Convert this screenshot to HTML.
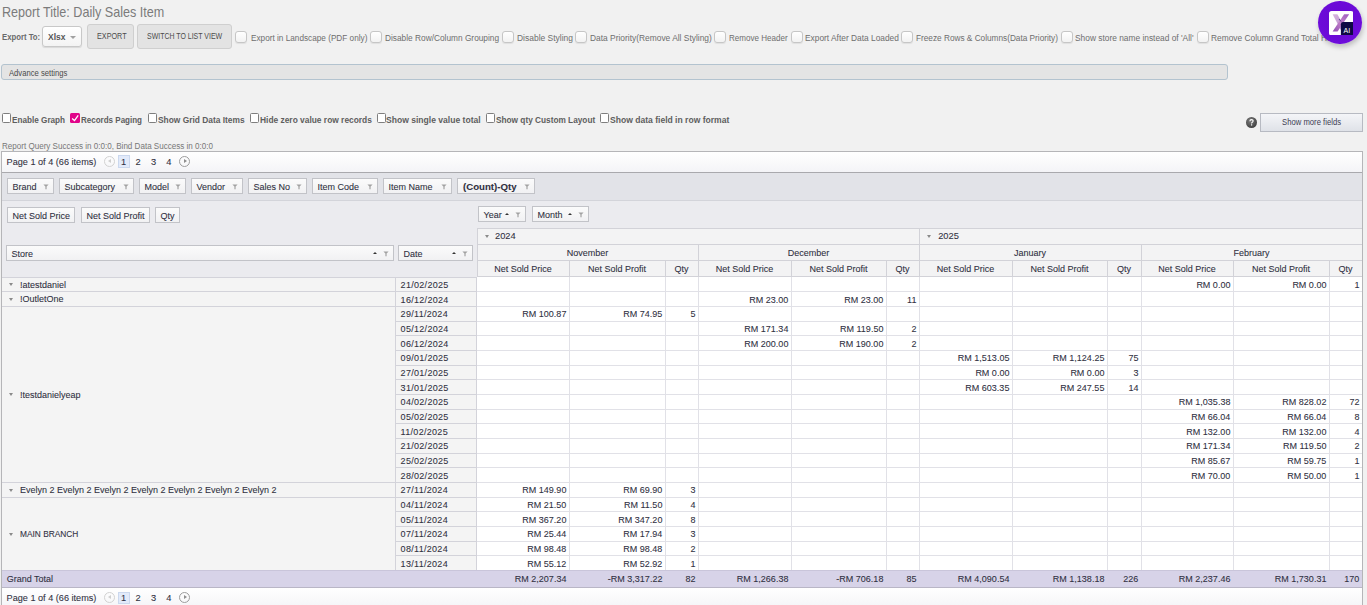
<!DOCTYPE html><html><head><meta charset="utf-8"><style>
*{margin:0;padding:0;box-sizing:border-box}
html,body{width:1367px;height:605px;overflow:hidden;background:#f1f1f1;font-family:"Liberation Sans", sans-serif;position:relative}
.t{position:absolute;white-space:nowrap;line-height:12px;transform-origin:0 0}
.a{position:absolute}
.cb{position:absolute;width:12px;height:12px;border:1px solid #c6c6c6;border-radius:3px;background:linear-gradient(#fff,#f2f2f2);box-shadow:0 1px 1px rgba(0,0,0,.07)}
.cb2{position:absolute;width:9px;height:10px;border:1px solid #7e7e7e;border-radius:1.5px;background:#fff}
.fb{position:absolute;border:1px solid #c2c3c8;background:#f8f8f8;height:15px}
.ft{position:absolute;white-space:nowrap;font-size:9px;line-height:12px;color:#30303f;-webkit-text-stroke:0.08px #30303f}
.ico{position:absolute;width:0;height:0;border-left:2.5px solid transparent;border-right:2.5px solid transparent;border-top:4px solid #8a8a8a}
.up{position:absolute;width:0;height:0;border-left:3px solid transparent;border-right:3px solid transparent;border-bottom:4px solid #333}
.hl{position:absolute;height:1px}
.vl{position:absolute;width:1px}
</style></head><body>
<div class="t" style="left:1.50px;top:3.50px;font-size:14.5px;line-height:16px;color:#7b7b7b;transform:scaleX(0.868)">Report Title: Daily Sales Item</div>
<div class="t" style="left:1.50px;top:30.50px;font-size:9px;font-weight:bold;color:#6a6a6a;transform:scaleX(0.86)">Export To:</div>
<div class="a" style="left:42px;top:26px;width:40px;height:21px;border:1px solid #c8c8c8;border-radius:3px;background:linear-gradient(#fff,#f3f3f3);box-shadow:0 1px 1px rgba(0,0,0,.1)"></div>
<div class="t" style="left:48.20px;top:30.20px;font-size:9.5px;line-height:13px;font-weight:bold;color:#555;transform:scaleX(0.89)">Xlsx</div>
<div class="a" style="left:70.2px;top:35.5px;width:0;height:0;border-left:3px solid transparent;border-right:3px solid transparent;border-top:3px solid #a0a0a0"></div>
<div class="a" style="left:87px;top:24px;width:47px;height:25px;border:1px solid #cfcfcf;border-radius:3px;background:#e3e3e3"></div>
<div class="t" style="left:96.60px;top:30.20px;font-size:8.5px;color:#4c4c4c;transform:scaleX(0.85)">EXPORT</div>
<div class="a" style="left:137px;top:24px;width:95px;height:25px;border:1px solid #cfcfcf;border-radius:3px;background:#e3e3e3"></div>
<div class="t" style="left:146.50px;top:30.20px;font-size:8.5px;color:#4c4c4c;transform:scaleX(0.82)">SWITCH TO LIST VIEW</div>
<div class="cb" style="left:235.0px;top:31.0px"></div>
<div class="t" style="left:250.80px;top:32.20px;font-size:9.2px;color:#6e6e6e;transform:scaleX(0.8939)">Export in Landscape (PDF only)</div>
<div class="cb" style="left:369.8px;top:31.0px"></div>
<div class="t" style="left:384.70px;top:32.20px;font-size:9.2px;color:#6e6e6e;transform:scaleX(0.9045)">Disable Row/Column Grouping</div>
<div class="cb" style="left:502.0px;top:31.0px"></div>
<div class="t" style="left:516.50px;top:32.20px;font-size:9.2px;color:#6e6e6e;transform:scaleX(0.9213)">Disable Styling</div>
<div class="cb" style="left:575.1px;top:31.0px"></div>
<div class="t" style="left:589.80px;top:32.20px;font-size:9.2px;color:#6e6e6e;transform:scaleX(0.9140)">Data Priority(Remove All Styling)</div>
<div class="cb" style="left:714.4px;top:31.0px"></div>
<div class="t" style="left:728.70px;top:32.20px;font-size:9.2px;color:#6e6e6e;transform:scaleX(0.8759)">Remove Header</div>
<div class="cb" style="left:790.5px;top:31.0px"></div>
<div class="t" style="left:804.60px;top:32.20px;font-size:9.2px;color:#6e6e6e;transform:scaleX(0.9101)">Export After Data Loaded</div>
<div class="cb" style="left:901.4px;top:31.0px"></div>
<div class="t" style="left:915.60px;top:32.20px;font-size:9.2px;color:#6e6e6e;transform:scaleX(0.8971)">Freeze Rows &amp; Columns(Data Priority)</div>
<div class="cb" style="left:1060.9px;top:31.0px"></div>
<div class="t" style="left:1075.30px;top:32.20px;font-size:9.2px;color:#6e6e6e;transform:scaleX(0.9103)">Show store name instead of 'All'</div>
<div class="cb" style="left:1196.5px;top:31.0px"></div>
<div class="t" style="left:1210.70px;top:32.20px;font-size:9.2px;color:#6e6e6e;transform:scaleX(0.9100)">Remove Column Grand Total Header</div>
<div class="a" style="left:1px;top:64px;width:1227px;height:16px;border:1px solid #b3c3cf;border-radius:3px;background:#e4e4e4"></div>
<div class="t" style="left:9.00px;top:67.20px;font-size:9px;color:#4a4a4a;transform:scaleX(0.8505)">Advance settings</div>
<div class="cb2" style="left:2.2px;top:113px"></div>
<div class="t" style="left:12.40px;top:113.60px;font-size:9px;font-weight:bold;color:#5e5e5e;transform:scaleX(0.9074)">Enable Graph</div>
<div class="a" style="left:70px;top:113px;width:10px;height:10px;background:#e1058a;border-radius:1.5px"></div>
<svg class="a" style="left:70px;top:113px" width="10" height="10" viewBox="0 0 10 10"><path d="M2.1 5.6 L4.5 7.6 L8.2 2.4" fill="none" stroke="#fff" stroke-width="1.3"/></svg>
<div class="t" style="left:81.20px;top:113.60px;font-size:9px;font-weight:bold;color:#5e5e5e;transform:scaleX(0.8903)">Records Paging</div>
<div class="cb2" style="left:147.7px;top:113px"></div>
<div class="t" style="left:157.60px;top:113.60px;font-size:9px;font-weight:bold;color:#5e5e5e;transform:scaleX(0.9309)">Show Grid Data Items</div>
<div class="cb2" style="left:249.7px;top:113px"></div>
<div class="t" style="left:259.60px;top:113.60px;font-size:9px;font-weight:bold;color:#5e5e5e;transform:scaleX(0.9321)">Hide zero value row records</div>
<div class="cb2" style="left:376.6px;top:113px"></div>
<div class="t" style="left:386.20px;top:113.60px;font-size:9px;font-weight:bold;color:#5e5e5e;transform:scaleX(0.9515)">Show single value total</div>
<div class="cb2" style="left:485.5px;top:113px"></div>
<div class="t" style="left:495.80px;top:113.60px;font-size:9px;font-weight:bold;color:#5e5e5e;transform:scaleX(0.9185)">Show qty Custom Layout</div>
<div class="cb2" style="left:600.0px;top:113px"></div>
<div class="t" style="left:610.40px;top:113.60px;font-size:9px;font-weight:bold;color:#5e5e5e;transform:scaleX(0.9505)">Show data field in row format</div>
<svg class="a" style="left:1246px;top:117px" width="11" height="11" viewBox="0 0 11 11"><defs><radialGradient id="qg" cx="40%" cy="35%" r="70%"><stop offset="0" stop-color="#7c7c7c"/><stop offset="1" stop-color="#3f3f3f"/></radialGradient></defs><circle cx="5.5" cy="5.5" r="5.5" fill="url(#qg)"/><path d="M3.9 4.2 Q3.9 2.6 5.5 2.6 Q7.1 2.6 7.1 4.0 Q7.1 4.9 6.1 5.4 Q5.6 5.7 5.6 6.5" fill="none" stroke="#fff" stroke-width="1.1"/><rect x="5" y="7.3" width="1.2" height="1.2" fill="#fff"/></svg>
<div class="a" style="left:1260px;top:113px;width:103px;height:19px;border:1px solid #b7bac2;background:linear-gradient(#f4f5f8,#dfe2e8)"></div>
<div class="t" style="left:1282.00px;top:116.00px;font-size:9px;color:#3c3c52;transform:scaleX(0.8547)">Show more fields</div>
<div class="t" style="left:1.50px;top:139.80px;font-size:8.5px;color:#777;transform:scaleX(0.9481)">Report Query Success in 0:0:0, Bind Data Success in 0:0:0</div>
<div class="a" style="left:1px;top:151.4px;width:1362.0px;height:458.6px;border:1px solid #b5b5b8;border-bottom:none;background:#ebebef"></div>
<div class="a" style="left:2px;top:152.4px;width:1360.0px;height:19.6px;background:linear-gradient(#fff,#f4f4f7)"></div>
<div class="hl" style="left:2px;top:172.0px;width:1360.0px;background:#a9a9ad"></div>
<div class="ft" style="left:6.6px;top:155.50px;font-size:9.15px">Page 1 of 4 (66 items)</div>
<div class="a" style="left:103.9px;top:155.60px;width:11px;height:11px;border:1px solid #d2d2d2;border-radius:50%"></div>
<div class="a" style="left:107.6px;top:158.80px;width:0;height:0;border-top:2.3px solid transparent;border-bottom:2.3px solid transparent;border-right:3px solid #cfcfcf"></div>
<div class="a" style="left:117.6px;top:155.20px;width:12.3px;height:12.4px;border:1px solid #cbd8ee;background:#e2eafa"></div>
<div class="ft" style="left:121.1px;top:155.50px;font-size:9.3px">1</div>
<div class="ft" style="left:135.5px;top:155.50px;font-size:9.3px">2</div>
<div class="ft" style="left:150.9px;top:155.50px;font-size:9.3px">3</div>
<div class="ft" style="left:166.3px;top:155.50px;font-size:9.3px">4</div>
<div class="a" style="left:179px;top:155.60px;width:11px;height:11px;border:1px solid #9d9d9d;border-radius:50%"></div>
<div class="a" style="left:183.6px;top:158.80px;width:0;height:0;border-top:2.3px solid transparent;border-bottom:2.3px solid transparent;border-left:3px solid #8e8e8e"></div>
<div class="a" style="left:2px;top:173.0px;width:1360.0px;height:27.2px;background:#e2e3e8"></div>
<div class="hl" style="left:2px;top:200.2px;width:1360.0px;background:#d3d4da"></div>
<div class="fb" style="left:7.0px;top:178.0px;width:47.0px;height:16.0px;background:linear-gradient(#fbfbfb,#f1f1f3)"></div>
<div class="ft" style="left:12.5px;top:180.5px;">Brand</div>
<svg class="a" style="left:43.0px;top:184.4px" width="6" height="6" viewBox="0 0 6 6"><path d="M0.4 0.5H5.6L3.6 2.6V5.2H2.4V2.6Z" fill="#a2a2a2"/></svg>
<div class="fb" style="left:59.0px;top:178.0px;width:75.0px;height:16.0px;background:linear-gradient(#fbfbfb,#f1f1f3)"></div>
<div class="ft" style="left:64.5px;top:180.5px;">Subcategory</div>
<svg class="a" style="left:123.0px;top:184.4px" width="6" height="6" viewBox="0 0 6 6"><path d="M0.4 0.5H5.6L3.6 2.6V5.2H2.4V2.6Z" fill="#a2a2a2"/></svg>
<div class="fb" style="left:139.0px;top:178.0px;width:47.0px;height:16.0px;background:linear-gradient(#fbfbfb,#f1f1f3)"></div>
<div class="ft" style="left:144.5px;top:180.5px;">Model</div>
<svg class="a" style="left:175.0px;top:184.4px" width="6" height="6" viewBox="0 0 6 6"><path d="M0.4 0.5H5.6L3.6 2.6V5.2H2.4V2.6Z" fill="#a2a2a2"/></svg>
<div class="fb" style="left:191.0px;top:178.0px;width:52.0px;height:16.0px;background:linear-gradient(#fbfbfb,#f1f1f3)"></div>
<div class="ft" style="left:196.5px;top:180.5px;">Vendor</div>
<svg class="a" style="left:232.0px;top:184.4px" width="6" height="6" viewBox="0 0 6 6"><path d="M0.4 0.5H5.6L3.6 2.6V5.2H2.4V2.6Z" fill="#a2a2a2"/></svg>
<div class="fb" style="left:248.0px;top:178.0px;width:59.0px;height:16.0px;background:linear-gradient(#fbfbfb,#f1f1f3)"></div>
<div class="ft" style="left:253.5px;top:180.5px;">Sales No</div>
<svg class="a" style="left:296.0px;top:184.4px" width="6" height="6" viewBox="0 0 6 6"><path d="M0.4 0.5H5.6L3.6 2.6V5.2H2.4V2.6Z" fill="#a2a2a2"/></svg>
<div class="fb" style="left:312.0px;top:178.0px;width:66.0px;height:16.0px;background:linear-gradient(#fbfbfb,#f1f1f3)"></div>
<div class="ft" style="left:317.5px;top:180.5px;">Item Code</div>
<svg class="a" style="left:367.0px;top:184.4px" width="6" height="6" viewBox="0 0 6 6"><path d="M0.4 0.5H5.6L3.6 2.6V5.2H2.4V2.6Z" fill="#a2a2a2"/></svg>
<div class="fb" style="left:383.0px;top:178.0px;width:69.0px;height:16.0px;background:linear-gradient(#fbfbfb,#f1f1f3)"></div>
<div class="ft" style="left:388.5px;top:180.5px;">Item Name</div>
<svg class="a" style="left:441.0px;top:184.4px" width="6" height="6" viewBox="0 0 6 6"><path d="M0.4 0.5H5.6L3.6 2.6V5.2H2.4V2.6Z" fill="#a2a2a2"/></svg>
<div class="fb" style="left:457.0px;top:178.0px;width:78.0px;height:16.0px;background:linear-gradient(#fbfbfb,#f1f1f3)"></div>
<div class="ft" style="left:462.5px;top:180.5px;font-weight:bold;transform-origin:0 0;transform:scaleX(1.07);">(Count)-Qty</div>
<svg class="a" style="left:524.0px;top:184.4px" width="6" height="6" viewBox="0 0 6 6"><path d="M0.4 0.5H5.6L3.6 2.6V5.2H2.4V2.6Z" fill="#a2a2a2"/></svg>
<div class="fb" style="left:7.0px;top:207px;width:68.0px;height:16px;background:linear-gradient(#fbfbfb,#f1f1f3)"></div>
<div class="ft" style="left:12.4px;top:209.6px">Net Sold Price</div>
<div class="fb" style="left:81.0px;top:207px;width:69.0px;height:16px;background:linear-gradient(#fbfbfb,#f1f1f3)"></div>
<div class="ft" style="left:86.4px;top:209.6px">Net Sold Profit</div>
<div class="fb" style="left:155.0px;top:207px;width:25.0px;height:16px;background:linear-gradient(#fbfbfb,#f1f1f3)"></div>
<div class="ft" style="left:160.4px;top:209.6px">Qty</div>
<div class="fb" style="left:478.0px;top:206.0px;width:48.0px;height:16.0px;background:linear-gradient(#fbfbfb,#f1f1f3)"></div>
<div class="ft" style="left:483.5px;top:208.5px;">Year</div>
<svg class="a" style="left:515.0px;top:212.4px" width="6" height="6" viewBox="0 0 6 6"><path d="M0.4 0.5H5.6L3.6 2.6V5.2H2.4V2.6Z" fill="#a2a2a2"/></svg>
<div class="up" style="left:504.7px;top:212.9px;border-left-width:2.7px;border-right-width:2.7px;border-bottom-width:2.7px"></div>
<div class="fb" style="left:532.0px;top:206.0px;width:57.0px;height:16.0px;background:linear-gradient(#fbfbfb,#f1f1f3)"></div>
<div class="ft" style="left:537.5px;top:208.5px;">Month</div>
<svg class="a" style="left:578.0px;top:212.4px" width="6" height="6" viewBox="0 0 6 6"><path d="M0.4 0.5H5.6L3.6 2.6V5.2H2.4V2.6Z" fill="#a2a2a2"/></svg>
<div class="up" style="left:567.7px;top:212.9px;border-left-width:2.7px;border-right-width:2.7px;border-bottom-width:2.7px"></div>
<div class="fb" style="left:6.0px;top:245.0px;width:388.0px;height:16.0px;background:linear-gradient(#fbfbfb,#f1f1f3)"></div>
<div class="ft" style="left:11.5px;top:247.5px;">Store</div>
<svg class="a" style="left:383.0px;top:251.4px" width="6" height="6" viewBox="0 0 6 6"><path d="M0.4 0.5H5.6L3.6 2.6V5.2H2.4V2.6Z" fill="#a2a2a2"/></svg>
<div class="up" style="left:372.7px;top:251.9px;border-left-width:2.7px;border-right-width:2.7px;border-bottom-width:2.7px"></div>
<div class="fb" style="left:398.0px;top:245.0px;width:75.0px;height:16.0px;background:linear-gradient(#fbfbfb,#f1f1f3)"></div>
<div class="ft" style="left:403.5px;top:247.5px;">Date</div>
<svg class="a" style="left:462.0px;top:251.4px" width="6" height="6" viewBox="0 0 6 6"><path d="M0.4 0.5H5.6L3.6 2.6V5.2H2.4V2.6Z" fill="#a2a2a2"/></svg>
<div class="up" style="left:451.7px;top:251.9px;border-left-width:2.7px;border-right-width:2.7px;border-bottom-width:2.7px"></div>
<div class="a" style="left:477.0px;top:228.0px;width:885.0px;height:48.0px;background:#f3f3f4"></div>
<div class="hl" style="left:477.0px;top:228.0px;width:885.0px;background:#d2d2d8"></div>
<div class="hl" style="left:477.0px;top:244.0px;width:885.0px;background:#d2d2d8"></div>
<div class="hl" style="left:477.0px;top:260.0px;width:885.0px;background:#d2d2d8"></div>
<div class="hl" style="left:477.0px;top:276.0px;width:885.0px;background:#d2d2d8"></div>
<div class="vl" style="left:477.0px;top:228.0px;height:48.0px;background:#d2d2d8"></div>
<div class="vl" style="left:919.0px;top:228.0px;height:48.0px;background:#d2d2d8"></div>
<div class="vl" style="left:698.0px;top:244.0px;height:32.0px;background:#d2d2d8"></div>
<div class="vl" style="left:1141.0px;top:244.0px;height:32.0px;background:#d2d2d8"></div>
<div class="vl" style="left:569.0px;top:260.0px;height:16.0px;background:#d2d2d8"></div>
<div class="vl" style="left:665.0px;top:260.0px;height:16.0px;background:#d2d2d8"></div>
<div class="vl" style="left:791.0px;top:260.0px;height:16.0px;background:#d2d2d8"></div>
<div class="vl" style="left:886.0px;top:260.0px;height:16.0px;background:#d2d2d8"></div>
<div class="vl" style="left:1012.0px;top:260.0px;height:16.0px;background:#d2d2d8"></div>
<div class="vl" style="left:1107.0px;top:260.0px;height:16.0px;background:#d2d2d8"></div>
<div class="vl" style="left:1233.0px;top:260.0px;height:16.0px;background:#d2d2d8"></div>
<div class="vl" style="left:1329.0px;top:260.0px;height:16.0px;background:#d2d2d8"></div>
<div class="a" style="left:484.5px;top:235.0px;width:0;height:0;border-left:2.8px solid transparent;border-right:2.8px solid transparent;border-top:3.2px solid #8a8a8a"></div>
<div class="ft" style="left:495.0px;top:230.2px;font-size:9.3px">2024</div>
<div class="a" style="left:927.4px;top:235.0px;width:0;height:0;border-left:2.8px solid transparent;border-right:2.8px solid transparent;border-top:3.2px solid #8a8a8a"></div>
<div class="ft" style="left:938.2px;top:230.2px;font-size:9.3px">2025</div>
<div class="ft" style="left:477.0px;top:247.0px;width:221.0px;text-align:center">November</div>
<div class="ft" style="left:477.0px;top:263.1px;width:92.0px;text-align:center">Net Sold Price</div>
<div class="ft" style="left:569.0px;top:263.1px;width:96.0px;text-align:center">Net Sold Profit</div>
<div class="ft" style="left:665.0px;top:263.1px;width:33.0px;text-align:center">Qty</div>
<div class="ft" style="left:698.0px;top:247.0px;width:221.0px;text-align:center">December</div>
<div class="ft" style="left:698.0px;top:263.1px;width:93.0px;text-align:center">Net Sold Price</div>
<div class="ft" style="left:791.0px;top:263.1px;width:95.0px;text-align:center">Net Sold Profit</div>
<div class="ft" style="left:886.0px;top:263.1px;width:33.0px;text-align:center">Qty</div>
<div class="ft" style="left:919.0px;top:247.0px;width:222.0px;text-align:center">January</div>
<div class="ft" style="left:919.0px;top:263.1px;width:93.0px;text-align:center">Net Sold Price</div>
<div class="ft" style="left:1012.0px;top:263.1px;width:95.0px;text-align:center">Net Sold Profit</div>
<div class="ft" style="left:1107.0px;top:263.1px;width:34.0px;text-align:center">Qty</div>
<div class="ft" style="left:1141.0px;top:247.0px;width:221.0px;text-align:center">February</div>
<div class="ft" style="left:1141.0px;top:263.1px;width:92.0px;text-align:center">Net Sold Price</div>
<div class="ft" style="left:1233.0px;top:263.1px;width:96.0px;text-align:center">Net Sold Profit</div>
<div class="ft" style="left:1329.0px;top:263.1px;width:33.0px;text-align:center">Qty</div>
<div class="a" style="left:2px;top:276.70px;width:474.0px;height:293.36px;background:#f4f4f4"></div>
<div class="a" style="left:476.0px;top:276.70px;width:886.0px;height:293.36px;background:#fff"></div>
<div class="hl" style="left:395.0px;top:276.70px;width:81.0px;background:#d3d3da"></div>
<div class="hl" style="left:476.0px;top:291.37px;width:886.0px;background:#e1e1e7"></div>
<div class="hl" style="left:395.0px;top:291.37px;width:81.0px;background:#d3d3da"></div>
<div class="hl" style="left:476.0px;top:306.04px;width:886.0px;background:#e1e1e7"></div>
<div class="hl" style="left:395.0px;top:306.04px;width:81.0px;background:#d3d3da"></div>
<div class="hl" style="left:476.0px;top:320.70px;width:886.0px;background:#e1e1e7"></div>
<div class="hl" style="left:395.0px;top:320.70px;width:81.0px;background:#d3d3da"></div>
<div class="hl" style="left:476.0px;top:335.37px;width:886.0px;background:#e1e1e7"></div>
<div class="hl" style="left:395.0px;top:335.37px;width:81.0px;background:#d3d3da"></div>
<div class="hl" style="left:476.0px;top:350.04px;width:886.0px;background:#e1e1e7"></div>
<div class="hl" style="left:395.0px;top:350.04px;width:81.0px;background:#d3d3da"></div>
<div class="hl" style="left:476.0px;top:364.71px;width:886.0px;background:#e1e1e7"></div>
<div class="hl" style="left:395.0px;top:364.71px;width:81.0px;background:#d3d3da"></div>
<div class="hl" style="left:476.0px;top:379.38px;width:886.0px;background:#e1e1e7"></div>
<div class="hl" style="left:395.0px;top:379.38px;width:81.0px;background:#d3d3da"></div>
<div class="hl" style="left:476.0px;top:394.04px;width:886.0px;background:#e1e1e7"></div>
<div class="hl" style="left:395.0px;top:394.04px;width:81.0px;background:#d3d3da"></div>
<div class="hl" style="left:476.0px;top:408.71px;width:886.0px;background:#e1e1e7"></div>
<div class="hl" style="left:395.0px;top:408.71px;width:81.0px;background:#d3d3da"></div>
<div class="hl" style="left:476.0px;top:423.38px;width:886.0px;background:#e1e1e7"></div>
<div class="hl" style="left:395.0px;top:423.38px;width:81.0px;background:#d3d3da"></div>
<div class="hl" style="left:476.0px;top:438.05px;width:886.0px;background:#e1e1e7"></div>
<div class="hl" style="left:395.0px;top:438.05px;width:81.0px;background:#d3d3da"></div>
<div class="hl" style="left:476.0px;top:452.72px;width:886.0px;background:#e1e1e7"></div>
<div class="hl" style="left:395.0px;top:452.72px;width:81.0px;background:#d3d3da"></div>
<div class="hl" style="left:476.0px;top:467.38px;width:886.0px;background:#e1e1e7"></div>
<div class="hl" style="left:395.0px;top:467.38px;width:81.0px;background:#d3d3da"></div>
<div class="hl" style="left:476.0px;top:482.05px;width:886.0px;background:#e1e1e7"></div>
<div class="hl" style="left:395.0px;top:482.05px;width:81.0px;background:#d3d3da"></div>
<div class="hl" style="left:476.0px;top:496.72px;width:886.0px;background:#e1e1e7"></div>
<div class="hl" style="left:395.0px;top:496.72px;width:81.0px;background:#d3d3da"></div>
<div class="hl" style="left:476.0px;top:511.39px;width:886.0px;background:#e1e1e7"></div>
<div class="hl" style="left:395.0px;top:511.39px;width:81.0px;background:#d3d3da"></div>
<div class="hl" style="left:476.0px;top:526.06px;width:886.0px;background:#e1e1e7"></div>
<div class="hl" style="left:395.0px;top:526.06px;width:81.0px;background:#d3d3da"></div>
<div class="hl" style="left:476.0px;top:540.72px;width:886.0px;background:#e1e1e7"></div>
<div class="hl" style="left:395.0px;top:540.72px;width:81.0px;background:#d3d3da"></div>
<div class="hl" style="left:476.0px;top:555.39px;width:886.0px;background:#e1e1e7"></div>
<div class="hl" style="left:395.0px;top:555.39px;width:81.0px;background:#d3d3da"></div>
<div class="hl" style="left:476.0px;top:570.06px;width:886.0px;background:#e1e1e7"></div>
<div class="hl" style="left:395.0px;top:570.06px;width:81.0px;background:#d3d3da"></div>
<div class="hl" style="left:2px;top:276.70px;width:393.0px;background:#d3d3da"></div>
<div class="a" style="left:8.8px;top:283.1px;width:0;height:0;border-left:2.8px solid transparent;border-right:2.8px solid transparent;border-top:3.2px solid #8a8a8a"></div>
<div class="ft" style="left:19.9px;top:278.63px">!atestdaniel</div>
<div class="hl" style="left:2px;top:291.37px;width:393.0px;background:#d3d3da"></div>
<div class="a" style="left:8.8px;top:297.8px;width:0;height:0;border-left:2.8px solid transparent;border-right:2.8px solid transparent;border-top:3.2px solid #8a8a8a"></div>
<div class="ft" style="left:19.9px;top:293.30px">!OutletOne</div>
<div class="hl" style="left:2px;top:306.04px;width:393.0px;background:#d3d3da"></div>
<div class="a" style="left:8.8px;top:393.1px;width:0;height:0;border-left:2.8px solid transparent;border-right:2.8px solid transparent;border-top:3.2px solid #8a8a8a"></div>
<div class="ft" style="left:19.9px;top:388.64px">!testdanielyeap</div>
<div class="hl" style="left:2px;top:482.05px;width:393.0px;background:#d3d3da"></div>
<div class="a" style="left:8.8px;top:488.5px;width:0;height:0;border-left:2.8px solid transparent;border-right:2.8px solid transparent;border-top:3.2px solid #8a8a8a"></div>
<div class="ft" style="left:19.9px;top:483.99px">Evelyn 2 Evelyn 2 Evelyn 2 Evelyn 2 Evelyn 2 Evelyn 2 Evelyn 2</div>
<div class="hl" style="left:2px;top:496.72px;width:393.0px;background:#d3d3da"></div>
<div class="a" style="left:8.8px;top:532.5px;width:0;height:0;border-left:2.8px solid transparent;border-right:2.8px solid transparent;border-top:3.2px solid #8a8a8a"></div>
<div class="ft" style="left:19.9px;top:527.99px;transform-origin:0 0;transform:scaleX(0.925)">MAIN BRANCH</div>
<div class="vl" style="left:569.0px;top:276.70px;height:293.36px;background:#e1e1e7"></div>
<div class="vl" style="left:665.0px;top:276.70px;height:293.36px;background:#e1e1e7"></div>
<div class="vl" style="left:698.0px;top:276.70px;height:293.36px;background:#e1e1e7"></div>
<div class="vl" style="left:791.0px;top:276.70px;height:293.36px;background:#e1e1e7"></div>
<div class="vl" style="left:886.0px;top:276.70px;height:293.36px;background:#e1e1e7"></div>
<div class="vl" style="left:919.0px;top:276.70px;height:293.36px;background:#e1e1e7"></div>
<div class="vl" style="left:1012.0px;top:276.70px;height:293.36px;background:#e1e1e7"></div>
<div class="vl" style="left:1107.0px;top:276.70px;height:293.36px;background:#e1e1e7"></div>
<div class="vl" style="left:1141.0px;top:276.70px;height:293.36px;background:#e1e1e7"></div>
<div class="vl" style="left:1233.0px;top:276.70px;height:293.36px;background:#e1e1e7"></div>
<div class="vl" style="left:1329.0px;top:276.70px;height:293.36px;background:#e1e1e7"></div>
<div class="vl" style="left:395.0px;top:276.70px;height:293.36px;background:#d3d3da"></div>
<div class="vl" style="left:476.0px;top:276.70px;height:293.36px;background:#d3d3da"></div>
<div class="ft" style="left:400.6px;top:278.90px;letter-spacing:0.3px">21/02/2025</div>
<div class="ft" style="left:1150.8px;top:278.90px;width:79.6px;text-align:right">RM 0.00</div>
<div class="ft" style="left:1246.8px;top:278.90px;width:79.6px;text-align:right">RM 0.00</div>
<div class="ft" style="left:1279.8px;top:278.90px;width:79.6px;text-align:right">1</div>
<div class="ft" style="left:400.6px;top:293.57px;letter-spacing:0.3px">16/12/2024</div>
<div class="ft" style="left:708.8px;top:293.57px;width:79.6px;text-align:right">RM 23.00</div>
<div class="ft" style="left:803.8px;top:293.57px;width:79.6px;text-align:right">RM 23.00</div>
<div class="ft" style="left:836.8px;top:293.57px;width:79.6px;text-align:right">11</div>
<div class="ft" style="left:400.6px;top:308.24px;letter-spacing:0.3px">29/11/2024</div>
<div class="ft" style="left:486.8px;top:308.24px;width:79.6px;text-align:right">RM 100.87</div>
<div class="ft" style="left:582.8px;top:308.24px;width:79.6px;text-align:right">RM 74.95</div>
<div class="ft" style="left:615.8px;top:308.24px;width:79.6px;text-align:right">5</div>
<div class="ft" style="left:400.6px;top:322.90px;letter-spacing:0.3px">05/12/2024</div>
<div class="ft" style="left:708.8px;top:322.90px;width:79.6px;text-align:right">RM 171.34</div>
<div class="ft" style="left:803.8px;top:322.90px;width:79.6px;text-align:right">RM 119.50</div>
<div class="ft" style="left:836.8px;top:322.90px;width:79.6px;text-align:right">2</div>
<div class="ft" style="left:400.6px;top:337.57px;letter-spacing:0.3px">06/12/2024</div>
<div class="ft" style="left:708.8px;top:337.57px;width:79.6px;text-align:right">RM 200.00</div>
<div class="ft" style="left:803.8px;top:337.57px;width:79.6px;text-align:right">RM 190.00</div>
<div class="ft" style="left:836.8px;top:337.57px;width:79.6px;text-align:right">2</div>
<div class="ft" style="left:400.6px;top:352.24px;letter-spacing:0.3px">09/01/2025</div>
<div class="ft" style="left:929.8px;top:352.24px;width:79.6px;text-align:right">RM 1,513.05</div>
<div class="ft" style="left:1024.8px;top:352.24px;width:79.6px;text-align:right">RM 1,124.25</div>
<div class="ft" style="left:1058.8px;top:352.24px;width:79.6px;text-align:right">75</div>
<div class="ft" style="left:400.6px;top:366.91px;letter-spacing:0.3px">27/01/2025</div>
<div class="ft" style="left:929.8px;top:366.91px;width:79.6px;text-align:right">RM 0.00</div>
<div class="ft" style="left:1024.8px;top:366.91px;width:79.6px;text-align:right">RM 0.00</div>
<div class="ft" style="left:1058.8px;top:366.91px;width:79.6px;text-align:right">3</div>
<div class="ft" style="left:400.6px;top:381.58px;letter-spacing:0.3px">31/01/2025</div>
<div class="ft" style="left:929.8px;top:381.58px;width:79.6px;text-align:right">RM 603.35</div>
<div class="ft" style="left:1024.8px;top:381.58px;width:79.6px;text-align:right">RM 247.55</div>
<div class="ft" style="left:1058.8px;top:381.58px;width:79.6px;text-align:right">14</div>
<div class="ft" style="left:400.6px;top:396.24px;letter-spacing:0.3px">04/02/2025</div>
<div class="ft" style="left:1150.8px;top:396.24px;width:79.6px;text-align:right">RM 1,035.38</div>
<div class="ft" style="left:1246.8px;top:396.24px;width:79.6px;text-align:right">RM 828.02</div>
<div class="ft" style="left:1279.8px;top:396.24px;width:79.6px;text-align:right">72</div>
<div class="ft" style="left:400.6px;top:410.91px;letter-spacing:0.3px">05/02/2025</div>
<div class="ft" style="left:1150.8px;top:410.91px;width:79.6px;text-align:right">RM 66.04</div>
<div class="ft" style="left:1246.8px;top:410.91px;width:79.6px;text-align:right">RM 66.04</div>
<div class="ft" style="left:1279.8px;top:410.91px;width:79.6px;text-align:right">8</div>
<div class="ft" style="left:400.6px;top:425.58px;letter-spacing:0.3px">11/02/2025</div>
<div class="ft" style="left:1150.8px;top:425.58px;width:79.6px;text-align:right">RM 132.00</div>
<div class="ft" style="left:1246.8px;top:425.58px;width:79.6px;text-align:right">RM 132.00</div>
<div class="ft" style="left:1279.8px;top:425.58px;width:79.6px;text-align:right">4</div>
<div class="ft" style="left:400.6px;top:440.25px;letter-spacing:0.3px">21/02/2025</div>
<div class="ft" style="left:1150.8px;top:440.25px;width:79.6px;text-align:right">RM 171.34</div>
<div class="ft" style="left:1246.8px;top:440.25px;width:79.6px;text-align:right">RM 119.50</div>
<div class="ft" style="left:1279.8px;top:440.25px;width:79.6px;text-align:right">2</div>
<div class="ft" style="left:400.6px;top:454.92px;letter-spacing:0.3px">25/02/2025</div>
<div class="ft" style="left:1150.8px;top:454.92px;width:79.6px;text-align:right">RM 85.67</div>
<div class="ft" style="left:1246.8px;top:454.92px;width:79.6px;text-align:right">RM 59.75</div>
<div class="ft" style="left:1279.8px;top:454.92px;width:79.6px;text-align:right">1</div>
<div class="ft" style="left:400.6px;top:469.58px;letter-spacing:0.3px">28/02/2025</div>
<div class="ft" style="left:1150.8px;top:469.58px;width:79.6px;text-align:right">RM 70.00</div>
<div class="ft" style="left:1246.8px;top:469.58px;width:79.6px;text-align:right">RM 50.00</div>
<div class="ft" style="left:1279.8px;top:469.58px;width:79.6px;text-align:right">1</div>
<div class="ft" style="left:400.6px;top:484.25px;letter-spacing:0.3px">27/11/2024</div>
<div class="ft" style="left:486.8px;top:484.25px;width:79.6px;text-align:right">RM 149.90</div>
<div class="ft" style="left:582.8px;top:484.25px;width:79.6px;text-align:right">RM 69.90</div>
<div class="ft" style="left:615.8px;top:484.25px;width:79.6px;text-align:right">3</div>
<div class="ft" style="left:400.6px;top:498.92px;letter-spacing:0.3px">04/11/2024</div>
<div class="ft" style="left:486.8px;top:498.92px;width:79.6px;text-align:right">RM 21.50</div>
<div class="ft" style="left:582.8px;top:498.92px;width:79.6px;text-align:right">RM 11.50</div>
<div class="ft" style="left:615.8px;top:498.92px;width:79.6px;text-align:right">4</div>
<div class="ft" style="left:400.6px;top:513.59px;letter-spacing:0.3px">05/11/2024</div>
<div class="ft" style="left:486.8px;top:513.59px;width:79.6px;text-align:right">RM 367.20</div>
<div class="ft" style="left:582.8px;top:513.59px;width:79.6px;text-align:right">RM 347.20</div>
<div class="ft" style="left:615.8px;top:513.59px;width:79.6px;text-align:right">8</div>
<div class="ft" style="left:400.6px;top:528.26px;letter-spacing:0.3px">07/11/2024</div>
<div class="ft" style="left:486.8px;top:528.26px;width:79.6px;text-align:right">RM 25.44</div>
<div class="ft" style="left:582.8px;top:528.26px;width:79.6px;text-align:right">RM 17.94</div>
<div class="ft" style="left:615.8px;top:528.26px;width:79.6px;text-align:right">3</div>
<div class="ft" style="left:400.6px;top:542.92px;letter-spacing:0.3px">08/11/2024</div>
<div class="ft" style="left:486.8px;top:542.92px;width:79.6px;text-align:right">RM 98.48</div>
<div class="ft" style="left:582.8px;top:542.92px;width:79.6px;text-align:right">RM 98.48</div>
<div class="ft" style="left:615.8px;top:542.92px;width:79.6px;text-align:right">2</div>
<div class="ft" style="left:400.6px;top:557.59px;letter-spacing:0.3px">13/11/2024</div>
<div class="ft" style="left:486.8px;top:557.59px;width:79.6px;text-align:right">RM 55.12</div>
<div class="ft" style="left:582.8px;top:557.59px;width:79.6px;text-align:right">RM 52.92</div>
<div class="ft" style="left:615.8px;top:557.59px;width:79.6px;text-align:right">1</div>
<div class="a" style="left:2px;top:570.0px;width:1360.0px;height:17.0px;background:#d7d3e8"></div>
<div class="hl" style="left:2px;top:570.0px;width:1360.0px;background:#c9c5da"></div>
<div class="hl" style="left:2px;top:587.0px;width:1360.0px;background:#b9b6c6"></div>
<div class="ft" style="left:6.7px;top:573.2px">Grand Total</div>
<div class="ft" style="left:486.8px;top:572.9px;width:79.6px;text-align:right">RM 2,207.34</div>
<div class="ft" style="left:582.8px;top:572.9px;width:79.6px;text-align:right">-RM 3,317.22</div>
<div class="ft" style="left:615.8px;top:572.9px;width:79.6px;text-align:right">82</div>
<div class="ft" style="left:708.8px;top:572.9px;width:79.6px;text-align:right">RM 1,266.38</div>
<div class="ft" style="left:803.8px;top:572.9px;width:79.6px;text-align:right">-RM 706.18</div>
<div class="ft" style="left:836.8px;top:572.9px;width:79.6px;text-align:right">85</div>
<div class="ft" style="left:929.8px;top:572.9px;width:79.6px;text-align:right">RM 4,090.54</div>
<div class="ft" style="left:1024.8px;top:572.9px;width:79.6px;text-align:right">RM 1,138.18</div>
<div class="ft" style="left:1058.8px;top:572.9px;width:79.6px;text-align:right">226</div>
<div class="ft" style="left:1150.8px;top:572.9px;width:79.6px;text-align:right">RM 2,237.46</div>
<div class="ft" style="left:1246.8px;top:572.9px;width:79.6px;text-align:right">RM 1,730.31</div>
<div class="ft" style="left:1279.8px;top:572.9px;width:79.6px;text-align:right">170</div>
<div class="a" style="left:2px;top:588.0px;width:1360.0px;height:20px;background:linear-gradient(#fff,#f4f4f7)"></div>
<div class="ft" style="left:6.6px;top:592.10px;font-size:9.15px">Page 1 of 4 (66 items)</div>
<div class="a" style="left:103.9px;top:592.20px;width:11px;height:11px;border:1px solid #d2d2d2;border-radius:50%"></div>
<div class="a" style="left:107.6px;top:595.40px;width:0;height:0;border-top:2.3px solid transparent;border-bottom:2.3px solid transparent;border-right:3px solid #cfcfcf"></div>
<div class="a" style="left:117.6px;top:591.80px;width:12.3px;height:12.4px;border:1px solid #cbd8ee;background:#e2eafa"></div>
<div class="ft" style="left:121.1px;top:592.10px;font-size:9.3px">1</div>
<div class="ft" style="left:135.5px;top:592.10px;font-size:9.3px">2</div>
<div class="ft" style="left:150.9px;top:592.10px;font-size:9.3px">3</div>
<div class="ft" style="left:166.3px;top:592.10px;font-size:9.3px">4</div>
<div class="a" style="left:179px;top:592.20px;width:11px;height:11px;border:1px solid #9d9d9d;border-radius:50%"></div>
<div class="a" style="left:183.6px;top:595.40px;width:0;height:0;border-top:2.3px solid transparent;border-bottom:2.3px solid transparent;border-left:3px solid #8e8e8e"></div>
<div class="a" style="left:1318.2px;top:0.8px;width:43.6px;height:43.6px;border-radius:50%;background:radial-gradient(circle at 50% 45%,#6708d2,#6c0bd8 60%,#7412e2);box-shadow:1px 3px 5px rgba(0,0,0,.22)"></div>
<svg class="a" style="left:1328.5px;top:10.7px" width="24.5" height="24.6" viewBox="0 0 24.5 24.6">
<defs>
<linearGradient id="lg1" x1="0" y1="0" x2="1" y2="1"><stop offset="0" stop-color="#d7b6df"/><stop offset="1" stop-color="#b98ccc"/></linearGradient>
<linearGradient id="lg2" x1="1" y1="0" x2="0" y2="1"><stop offset="0" stop-color="#9c5cc0"/><stop offset="0.5" stop-color="#c27fc8"/><stop offset="1" stop-color="#8e4fb4"/></linearGradient>
</defs>
<rect x="0" y="0" width="24.5" height="24.6" rx="2.6" fill="#fff"/>
<path d="M3.6 3.2 L8.4 3.2 L15 15 L11.8 19 Z" fill="url(#lg1)"/>
<path d="M15.1 3.2 L20.2 3.2 L8.6 20.6 L3.6 20.6 Z" fill="url(#lg2)"/>
<path d="M10 8 L12 10.5" stroke="#3a2a80" stroke-width="0.8"/>
<path d="M14 11.1 H24.5 V22 A2.6 2.6 0 0 1 21.9 24.6 H11.9 V13.2 A2.1 2.1 0 0 1 14 11.1 Z" fill="#0e0a44"/>
<text x="14.6" y="21.9" font-family="Liberation Sans" font-size="7" fill="#fff">AI</text>
</svg>
</body></html>
